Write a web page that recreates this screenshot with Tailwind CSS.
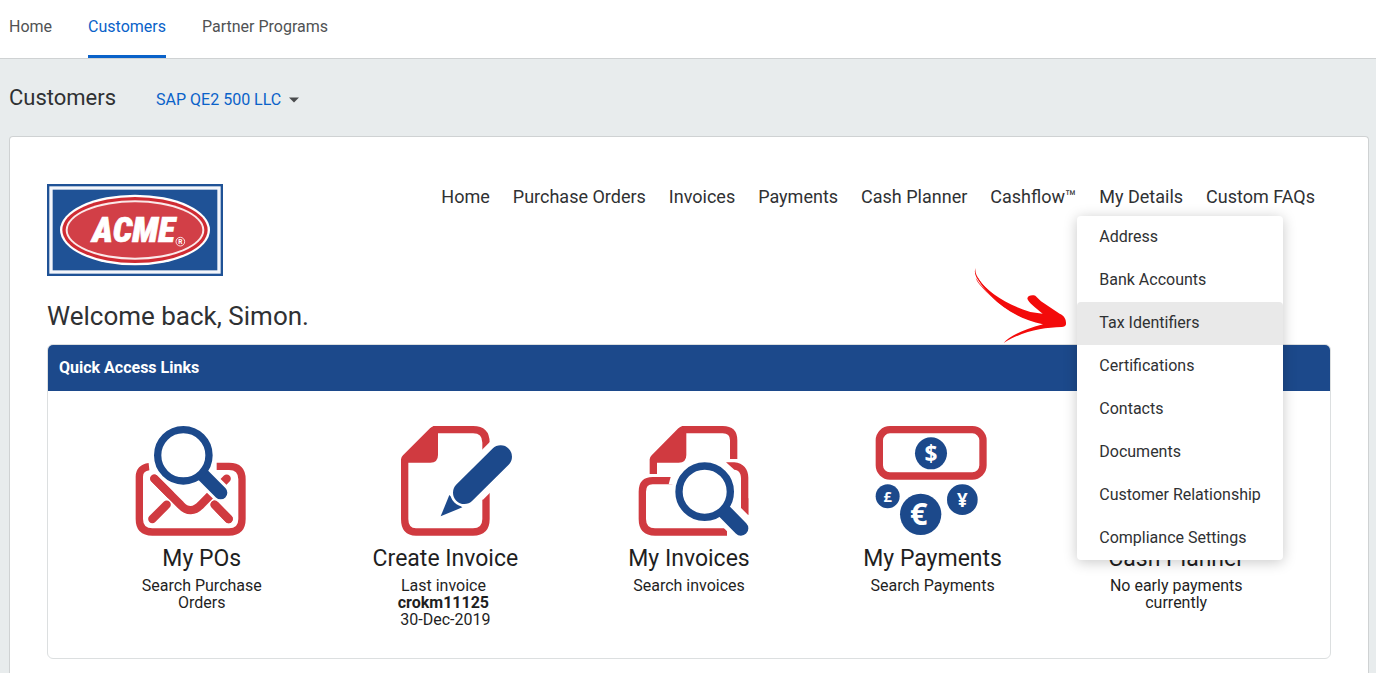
<!DOCTYPE html>
<html lang="en">
<head>
<meta charset="utf-8">
<meta name="viewport" content="width=device-width, initial-scale=1">
<title>Customers</title>
<script src="https://cdn.jsdelivr.net/npm/@tailwindcss/browser@4"></script>
</head>
<body class="min-h-screen overflow-hidden bg-[#e8eced] font-[Roboto,'Liberation_Sans',sans-serif] text-[#2f3133]">

<header class="border-b border-[#cfd2d3] bg-white px-[9px]">
  <nav aria-label="Main" class="flex gap-9 text-base leading-[22px] text-[#505254]">
    <a href="#" class="border-b-[3px] border-transparent pt-4 pb-[17px]">Home</a>
    <a href="#" aria-current="page" class="border-b-[3px] border-[#0a62c9] pt-4 pb-[17px] text-[#0a62c9]">Customers</a>
    <a href="#" class="border-b-[3px] border-transparent pt-4 pb-[17px]">Partner Programs</a>
  </nav>
</header>

<div class="flex items-center gap-10 px-[9px] pt-6 pb-6">
  <h1 class="text-[22px] leading-[29px]">Customers</h1>
  <button type="button" class="flex items-center gap-2 pt-1 text-base leading-[22px] text-[#0a62c9]">SAP QE2 500 LLC
    <svg class="h-[6px] w-[10px]" viewBox="0 0 10 6" aria-hidden="true"><path d="M0 0.5H10L5 5.5Z" fill="#4a4c4e"/></svg>
  </button>
</div>

<main class="mr-[7px] ml-[9px] rounded-t border border-b-0 border-[#cfd2d3] bg-white pr-[37px] pb-8 pl-[37px]">
  <div class="flex items-start justify-between pt-[47px] pr-4">
    <a href="#" aria-label="ACME" class="shrink-0">
      <svg class="h-[92px] w-44" viewBox="0 0 528 276">
        <rect width="528" height="276" fill="#1f5296"/>
        <rect x="12" y="12" width="504" height="252" fill="none" stroke="#f4f6fb" stroke-width="10"/>
        <ellipse cx="264" cy="138" rx="225" ry="106" fill="#fff"/>
        <ellipse cx="264" cy="138" rx="218" ry="99" fill="#cf2b33"/>
        <ellipse cx="264" cy="138" rx="208" ry="89" fill="#fbe9e9"/>
        <ellipse cx="264" cy="138" rx="202" ry="83" fill="#d23f47"/>
        <text x="260" y="174" text-anchor="middle" fill="#fff" stroke="#fff" stroke-width="2" class="font-['Roboto_Condensed','Open_Sans_Condensed',Lato] text-[106px] font-black italic">ACME</text>
        <circle cx="400" cy="173" r="13" fill="none" stroke="#fff" stroke-width="2.5"/>
        <text x="400" y="180" text-anchor="middle" fill="#fff" class="font-[Roboto] text-[20px] font-bold">R</text>
      </svg>
    </a>
    <nav aria-label="Customer" class="text-lg leading-[26px] whitespace-nowrap">
      <ul class="flex gap-[23px]">
        <li><a href="#">Home</a></li>
        <li><a href="#">Purchase Orders</a></li>
        <li><a href="#">Invoices</a></li>
        <li><a href="#">Payments</a></li>
        <li><a href="#">Cash Planner</a></li>
        <li><a href="#">Cashflow™</a></li>
        <li class="relative"><a href="#">My Details</a>
          <ul class="absolute top-8 -left-[22px] z-10 w-[206px] rounded bg-white text-base leading-[41px] shadow-[0_2px_14px_rgba(0,0,0,0.22)]">
            <li><a href="#" class="block px-[22px] pb-[2px]">Address</a></li>
            <li><a href="#" class="block px-[22px] pb-[2px]">Bank Accounts</a></li>
            <li class="relative"><a href="#" class="block rounded-t bg-[#e9e9e9] px-[22px] pb-[2px]">Tax Identifiers</a>
              <svg class="absolute -top-9 right-full mr-2 h-20 w-24" viewBox="38 288 288 240" aria-hidden="true">
                <path d="M46 293C43 304 48 316 55 327C80 365 135 402 210 426L247 431C225 413 204 396 201 386C202 376 215 374 225 377L242 394L298 431C313 438 318 449 317 463Q315 471 304 471C250 473 190 481 130 519C145 500 185 480 248 463C180 448 130 417 92 379C73 360 51 340 46 323L57 340C82 370 105 390 133 407C95 377 61 345 48 322C43 312 42 302 46 293Z" fill="#f30b0b"/>
                <path d="M50 318C72 360 130 407 212 437L250 446L245 460C180 444 135 418 98 383C75 362 57 340 50 318Z" fill="#f30b0b"/>
              </svg>
            </li>
            <li><a href="#" class="block px-[22px] pb-[2px]">Certifications</a></li>
            <li><a href="#" class="block px-[22px] pb-[2px]">Contacts</a></li>
            <li><a href="#" class="block px-[22px] pb-[2px]">Documents</a></li>
            <li><a href="#" class="block px-[22px] pb-[2px]">Customer Relationship</a></li>
            <li><a href="#" class="block px-[22px] pb-[2px]">Compliance Settings</a></li>
          </ul>
        </li>
        <li><a href="#">Custom FAQs</a></li>
      </ul>
    </nav>
  </div>

  <h2 class="pt-[23px] pb-[11px] text-[26px] leading-[34px]">Welcome back, Simon.</h2>

  <section class="overflow-hidden rounded-md border border-[#dcdfe0]">
    <h3 class="bg-[#1c498b] px-[11px] text-base leading-[46px] font-bold text-white">Quick Access Links</h3>
    <div class="grid grid-cols-5 px-8 pt-[34px] pb-[30px] text-center text-base leading-[17px] text-[#1f1f1f]">

      <a href="#" class="flex flex-col items-center">
        <svg class="h-28 w-[136px]" viewBox="42 30 408 336" fill="none" stroke-width="22" aria-hidden="true">
          <g stroke="#d03a40">
            <path d="M87 155C68 157 58 168 58 185V312Q58 351 97 351H327Q366 351 366 312V193Q366 154 327 154H290"/>
            <path stroke-linecap="round" stroke-linejoin="round" stroke-width="25" d="M103 191L182 270Q212 302 244 268L320 191M97 312L140 269M284 269L326 312"/>
          </g>
          <path d="M248 180L302 233" stroke="#fff" stroke-width="58" stroke-linecap="round"/>
          <circle cx="190" cy="121" r="77" fill="#fff" stroke="#fff" stroke-width="40"/>
          <path d="M103 191L150 238M284 269L326 312" stroke="#d03a40" stroke-width="25" stroke-linecap="round"/>
          <path d="M240 171L302 233" stroke="#1c498b" stroke-width="40" stroke-linecap="round"/>
          <circle cx="190" cy="121" r="77" fill="#fff" stroke="#1c498b"/>
        </svg>
        <span class="pt-2 pb-1 text-[23px] leading-[28px]">My POs</span>
        <span>Search Purchase<br>Orders</span>
      </a>

      <a href="#" class="flex flex-col items-center">
        <svg class="h-28 w-[136px]" viewBox="36 30 408 336" fill="none" aria-hidden="true">
          <path d="M119 132V312Q119 351 153 351H324Q363 351 363 312V83Q363 44 324 44H205" stroke="#d03a40" stroke-width="22"/>
          <path d="M219 33H206Q200 35 195 40L114 121Q109 126 108 133V143H196Q219 143 219 120Z" fill="#d03a40"/>
          <path d="M430 102L315 217" stroke="#fff" stroke-width="108"/>
          <path d="M227 304L253 240L292 277Z" fill="#1c498b"/>
          <path d="M407 125L298 233" stroke="#fff" stroke-width="84" stroke-linecap="round"/>
          <path d="M407 125L298 233" stroke="#1c498b" stroke-width="68" stroke-linecap="round"/>
        </svg>
        <span class="pt-2 pb-1 text-[23px] leading-[28px]">Create Invoice</span>
        <span><span class="pr-1">Last invoice</span><br><strong class="pr-1">crokm11125</strong><br>30-Dec-2019</span>
      </a>

      <a href="#" class="flex flex-col items-center">
        <svg class="h-28 w-[136px]" viewBox="3 30 408 336" fill="none" aria-hidden="true">
          <path d="M199 33H187Q180 35 175 40L95 121Q90 126 89 133V177H111V143H176Q199 143 199 120Z" fill="#d03a40"/>
          <g stroke="#d03a40" stroke-width="22">
            <path d="M190 44H308Q341 44 341 76V132"/>
            <path d="M157 197H98Q67 197 67 230V312Q67 351 105 351H321"/>
          </g>
          <path d="M318 142H343C370 145 385 162 385 188V300L363 278V190C363 174 356 165 343 164Z" fill="#d03a40"/>
          <path d="M152 186H190V208H146Z" fill="#fff"/>
          <path d="M304 280L363 340" stroke="#fff" stroke-width="72" stroke-linecap="square"/>
          <path d="M385 250V300L363 278V250Z" fill="#d03a40"/>
          <circle cx="254" cy="230" r="82" fill="#fff" stroke="#fff" stroke-width="28"/>
          <path d="M304 280L363 340" stroke="#1c498b" stroke-width="44" stroke-linecap="round"/>
          <circle cx="254" cy="230" r="77" fill="#fff" stroke="#1c498b" stroke-width="22"/>
        </svg>
        <span class="pt-2 pb-1 text-[23px] leading-[28px]">My Invoices</span>
        <span>Search invoices</span>
      </a>

      <a href="#" class="flex flex-col items-center">
        <svg class="h-28 w-[136px]" viewBox="15 30 408 336" aria-hidden="true">
          <rect x="58" y="44" width="311" height="139" rx="32" fill="none" stroke="#d03a40" stroke-width="22"/>
          <g fill="#1c498b"><circle cx="213" cy="115" r="48"/><circle cx="83" cy="244" r="36"/><circle cx="182" cy="298" r="62"/><circle cx="307" cy="254" r="46"/></g>
          <g fill="#fff" text-anchor="middle" class="font-['Open_Sans'] font-bold">
            <text x="213" y="140" class="text-[68px]">$</text>
            <text x="83" y="260" class="text-[44px]">£</text>
            <text x="176" y="331" class="text-[92px]">€</text>
            <text x="307" y="275" class="text-[56px]">¥</text>
          </g>
        </svg>
        <span class="pt-2 pb-1 text-[23px] leading-[28px]">My Payments</span>
        <span>Search Payments</span>
      </a>

      <a href="#" class="flex flex-col items-center">
        <span class="h-28 w-[136px]"></span>
        <span class="pt-2 pb-1 text-[23px] leading-[28px]">Cash Planner</span>
        <span>No early payments<br>currently</span>
      </a>
    </div>
  </section>
</main>
</body>
</html>
